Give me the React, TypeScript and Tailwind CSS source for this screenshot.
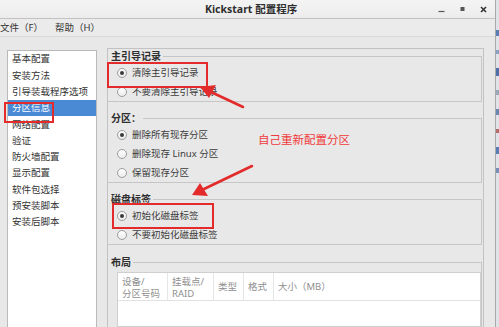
import React from "react";

const FONT = { fontFamily: '"Noto Sans", "Noto Sans CJK SC", sans-serif' };

function Radio({ checked }: { checked?: boolean }) {
  return (
    <span className="w-[10px] h-[10px] rounded-full border border-[#9c9c9c] bg-gradient-to-b from-white to-[#ececec] flex items-center justify-center shrink-0">
      {checked && <span className="w-[4px] h-[4px] rounded-full bg-[#3a3a3a]" />}
    </span>
  );
}

function RadioRow({ label, checked }: { label: string; checked?: boolean }) {
  return (
    <div className="h-[19px] flex items-center pl-[9px] gap-[5px]">
      <Radio checked={checked} />
      <span className="text-[9.5px] text-[#3c3c3c] leading-none">{label}</span>
    </div>
  );
}

function SectionHead({ title }: { title: string }) {
  return (
    <div className="flex h-[14px]">
      <span className="self-center pl-[3px] pr-[2px] text-[10px] font-bold text-[#2e2e2e] leading-none">{title}</span>
      <div className="flex-1 self-end h-[7px] border-t border-r border-[#c6c6c6]" />
    </div>
  );
}

const items = [
  "基本配置",
  "安装方法",
  "引导装载程序选项",
  "分区信息",
  "网络配置",
  "验证",
  "防火墙配置",
  "显示配置",
  "软件包选择",
  "预安装脚本",
  "安装后脚本",
];

export default function App() {
  return (
    <div className="relative w-[499px] h-[327px] overflow-hidden flex bg-[#e8e8e8]" style={FONT}>
      <div className="w-[496px] h-full flex flex-col border-r border-[#a9a9a9] bg-[#e8e8e8]">
        {/* title bar */}
        <div className="h-[19px] shrink-0 flex items-center bg-gradient-to-b from-[#f4f4f4] to-[#ececec] border-b border-[#c2c2c2]">
          <div className="w-[205px]" />
          <span className="text-[10.5px] font-bold text-[#2e2e2e] leading-none">Kickstart 配置程序</span>
          <div className="flex-1" />
          <div className="flex items-center gap-[14px] pr-[8px]">
            <svg width="7" height="7" viewBox="0 0 7 7"><path d="M0.5 5.5h6" stroke="#555" strokeWidth="1.2" /></svg>
            <svg width="7" height="7" viewBox="0 0 7 7"><rect x="1.5" y="1" width="4" height="4" fill="#555" /></svg>
            <svg width="7" height="7" viewBox="0 0 7 7"><path d="M1 1l5 5M6 1l-5 5" stroke="#333" strokeWidth="1.6" /></svg>
          </div>
        </div>
        {/* menu bar */}
        <div className="h-[18px] shrink-0 flex items-center gap-[12px] bg-[#ebebeb] border-b border-[#dadada] text-[9.5px] text-[#333] leading-none">
          <span>文件（F）</span>
          <span>帮助（H）</span>
        </div>
        {/* body */}
        <div className="flex-1 flex min-h-0">
          <div className="w-[107px] shrink-0 pl-[7px] pt-[13px]">
            <div className="w-[90px] h-[300px] bg-white border border-[#b9b9b9]">
              {items.map((it, i) => (
                <div
                  key={it}
                  className={
                    i === 3
                      ? "h-[16.3px] flex items-center pl-[4px] text-[9.5px] leading-none bg-[#4a8ad4] text-white"
                      : "h-[16.3px] flex items-center pl-[4px] text-[9.5px] leading-none text-[#333]"
                  }
                >
                  {it}
                </div>
              ))}
            </div>
          </div>
          <div className="w-[377px] shrink-0 mt-[11px] border-l border-t border-r border-[#c2c2c2] flex flex-col">
            {/* section 1 */}
            <div className="mr-[1px]">
              <SectionHead title="主引导记录" />
              <div className="border-r border-b border-[#c6c6c6]">
                <RadioRow label="清除主引导记录" checked />
                <RadioRow label="不要清除主引导记录" />
              </div>
            </div>
            {/* section 2 */}
            <div className="mr-[1px] mt-[9px]">
              <SectionHead title="分区：" />
              <div className="border-r border-b border-[#c6c6c6]">
                <RadioRow label="删除所有现存分区" checked />
                <RadioRow label="删除现存 Linux 分区" />
                <RadioRow label="保留现存分区" />
              </div>
            </div>
            {/* section 3 */}
            <div className="mr-[1px] mt-[9px]">
              <SectionHead title="磁盘标签" />
              <div className="border-r border-b border-[#c6c6c6]">
                <RadioRow label="初始化磁盘标签" checked />
                <RadioRow label="不要初始化磁盘标签" />
              </div>
            </div>
            {/* section 4 */}
            <div className="mr-[1px] mt-[10px] flex-1 flex flex-col">
              <SectionHead title="布局" />
              <div className="flex-1 border-r border-[#c6c6c6] pl-[9px] pt-[3px]">
                <div className="h-full bg-white border border-[#cfcfcf]">
                  <div className="h-[28px] flex border-b border-[#e2e2e2] text-[9.5px] text-[#8f8f8f] leading-[12px]">
                    <div className="w-[50px] pl-[4px] pt-[3px] border-r border-[#e6e6e6]">设备/<br />分区号码</div>
                    <div className="w-[46px] pl-[4px] pt-[3px] border-r border-[#e6e6e6]">挂载点/<br />RAID</div>
                    <div className="w-[30px] pl-[4px] flex items-center border-r border-[#e6e6e6]">类型</div>
                    <div className="w-[30px] pl-[4px] flex items-center border-r border-[#e6e6e6]">格式</div>
                    <div className="flex-1 pl-[4px] flex items-center">大小（MB）</div>
                  </div>
                </div>
              </div>
            </div>
          </div>
        </div>
      </div>
      {/* strip of window behind */}
      <div className="w-[3px] h-full bg-[#dfe3e8] flex flex-col gap-[14px] pt-[30px]">
        <div className="h-[6px] bg-[#5b7db5]" />
        <div className="h-[4px] bg-[#8aa0c0]" />
        <div className="h-[8px] bg-[#4e6fa8]" />
        <div className="h-[5px] bg-[#9aa7b8]" />
        <div className="h-[6px] bg-[#6c86b3]" />
        <div className="h-[4px] bg-[#b26a6a]" />
        <div className="h-[7px] bg-[#5b7db5]" />
        <div className="h-[5px] bg-[#7890b5]" />
      </div>

      {/* annotations */}
      <div className="absolute left-[4px] top-[102px] w-[50px] h-[21px] border-2 border-[#e42b2b]" />
      <div className="absolute left-[107px] top-[62px] w-[101px] h-[26px] border-2 border-[#e42b2b]" />
      <div className="absolute left-[112px] top-[203px] w-[102px] h-[26px] border-2 border-[#e42b2b]" />
      <span className="absolute left-[258px] top-[134px] text-[11.5px] leading-none text-[#f03a3a]">自己重新配置分区</span>
      <svg className="absolute left-0 top-0 pointer-events-none" width="499" height="327" viewBox="0 0 499 327">
        <path d="M243 107 L211 92" stroke="#e42b2b" strokeWidth="2.6" strokeLinecap="round" />
        <path d="M200 87 L216 85 L209 98 Z" fill="#e42b2b" />
        <path d="M252 166 L204 189" stroke="#e42b2b" strokeWidth="2.6" strokeLinecap="round" />
        <path d="M192 195 L200 183 L208 196 Z" fill="#e42b2b" />
      </svg>
    </div>
  );
}
